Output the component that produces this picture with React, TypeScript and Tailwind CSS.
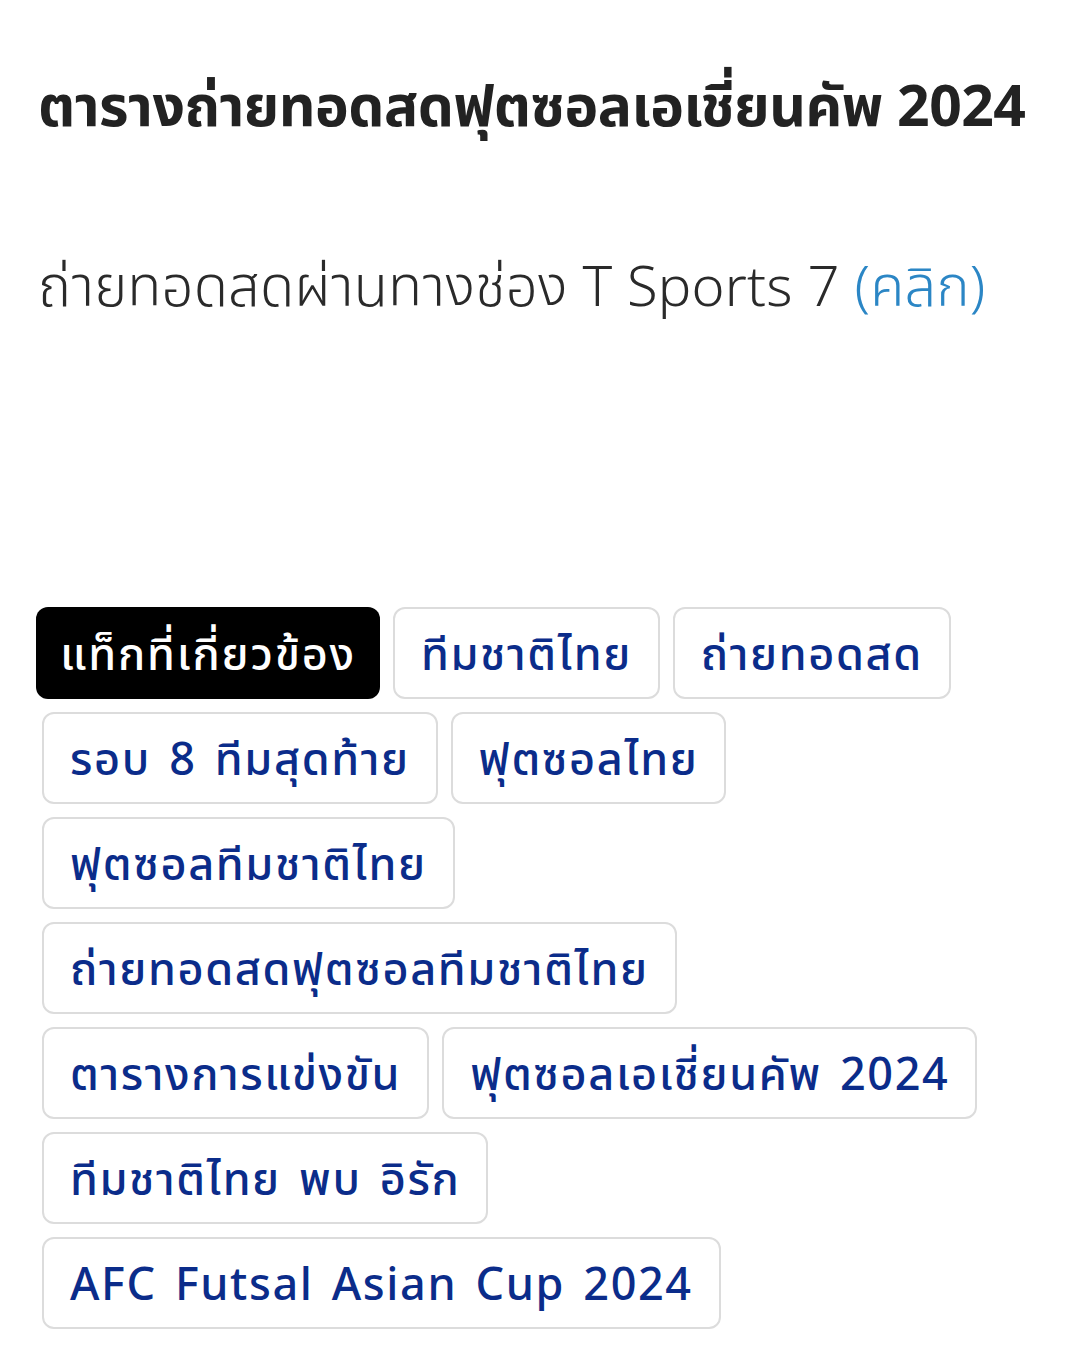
import React from 'react';

const tags = [
  'ทีมชาติไทย',
  'ถ่ายทอดสด',
  'รอบ 8 ทีมสุดท้าย',
  'ฟุตซอลไทย',
  'ฟุตซอลทีมชาติไทย',
  'ถ่ายทอดสดฟุตซอลทีมชาติไทย',
  'ตารางการแข่งขัน',
  'ฟุตซอลเอเชี่ยนคัพ 2024',
  'ทีมชาติไทย พบ อิรัก',
  'AFC Futsal Asian Cup 2024',
];

const Tag = ({ label }: { label: string }) => {
  return (
    <a
      href="#"
      className="ml-[6px] h-[92px] px-[26px] flex items-center rounded-[12px] border-2 border-[#dcdcdc] bg-white text-[#0b2c8a] text-[45px] font-medium tracking-[1.6px] [word-spacing:5px] leading-none"
    >
      {label}
    </a>
  );
};

const App = () => {
  return (
    <div className="min-h-screen bg-white font-['Noto_Sans','Noto_Sans_Thai',sans-serif]">
      <div className="px-[38px] pt-[70px]">
        <h1 className="text-[57px] font-bold text-[#222] leading-[1.2] tracking-[-0.5px]">
          ตารางถ่ายทอดสดฟุตซอลเอเชี่ยนคัพ 2024
        </h1>
        <p className="mt-[113px] text-[56px] font-light text-[#2a2a2a] leading-[1.2] tracking-[0.2px]">
          ถ่ายทอดสดผ่านทางช่อง T Sports 7{' '}
          <a href="#" className="text-[#2b86c5]">
            (คลิก)
          </a>
        </p>
      </div>
      <div className="mt-[288px] pl-[36px] pr-[20px] flex flex-wrap gap-x-[7px] gap-y-[13px]">
        <span className="h-[92px] px-[24px] flex items-center rounded-[12px] bg-black text-white text-[45px] font-medium tracking-[1.8px] leading-none">
          แท็กที่เกี่ยวข้อง
        </span>
        {tags.map((t) => (
          <Tag key={t} label={t} />
        ))}
      </div>
    </div>
  );
};

export default App;
